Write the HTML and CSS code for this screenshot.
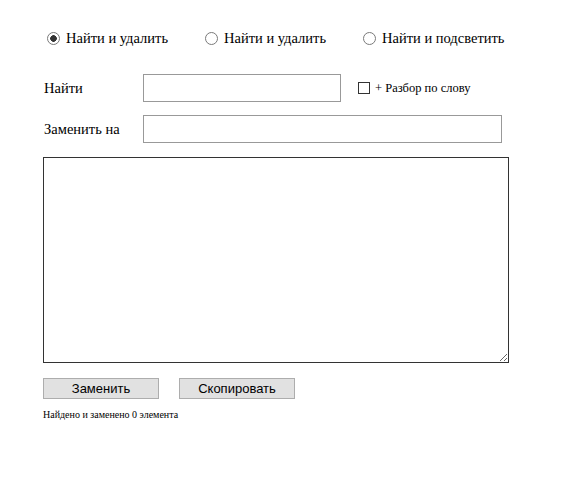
FILE: index.html
```
<!DOCTYPE html>
<html lang="ru">
<head>
  <meta charset="UTF-8" />
  <title>Найти и заменить</title>
  <link rel="stylesheet" href="styles.css">
</head>
<body>
  <div class="wrap">
    <div class="modes">
      <label class="mode"><input type="radio" name="mode" checked> Найти и удалить</label>
      <label class="mode"><input type="radio" name="mode"> Найти и удалить</label>
      <label class="mode"><input type="radio" name="mode"> Найти и подсветить</label>
    </div>

    <div class="row">
      <span class="caption">Найти</span>
      <input type="text" class="find">
      <label class="word"><input type="checkbox"> + Разбор по слову</label>
    </div>

    <div class="row">
      <span class="caption">Заменить на</span>
      <input type="text" class="replace">
    </div>

    <textarea class="text"></textarea>

    <div class="buttons">
      <button type="button">Заменить</button>
      <button type="button">Скопировать</button>
    </div>

    <p class="status">Найдено и заменено 0 элемента</p>
  </div>
</body>
</html>
```
FILE: styles.css
```
* {
  box-sizing: border-box;
}

body {
  margin: 0;
  background: #fff;
  color: #000;
  font-family: "Liberation Serif", "Times New Roman", serif;
}

.wrap {
  width: 509px;
  padding: 30px 0 0 43px;
}

.modes {
  display: flex;
  padding-left: 4px;
  font-size: 14.5px;
}

.mode {
  display: flex;
  flex-shrink: 0;
  align-items: center;
  gap: 6px;
  width: 158px;
}

.mode input {
  appearance: none;
  margin: 0;
  width: 13px;
  height: 13px;
  border: 1px solid #7a7a7a;
  border-radius: 50%;
  background: #fff;
}

.mode input:checked {
  background: radial-gradient(circle, #333 0, #333 3px, #fff 3.6px);
}

.row {
  display: flex;
  align-items: center;
  margin-top: 13px;
  font-size: 14.5px;
}

.modes + .row {
  margin-top: 27px;
}

.caption {
  width: 100px;
  padding-left: 1px;
}

input[type="text"] {
  height: 28px;
  margin: 0;
  border: 1px solid #999;
  font-size: 15px;
}

.find {
  width: 198px;
}

.replace {
  width: 359px;
  height: 27px;
  border-color: #b8b8b8;
  border-width: 2px 1px 1px 1px;
}

.word {
  display: flex;
  flex-shrink: 0;
  align-items: center;
  gap: 5px;
  margin-left: 17px;
  font-size: 12.5px;
}

.word input {
  appearance: none;
  margin: 0;
  width: 12px;
  height: 12px;
  border: 1px solid #333;
  background: #fff;
}

.text {
  display: block;
  width: 466px;
  height: 206px;
  margin: 14px 0 0;
  border: 1px solid #333;
  resize: both;
}

.buttons {
  display: flex;
  gap: 20px;
  margin-top: 15px;
}

button {
  width: 116px;
  height: 21px;
  padding: 0;
  background: #e1e1e1;
  border: 1px solid #adadad;
  font-family: "Liberation Sans", Arial, sans-serif;
  font-size: 13px;
  color: #000;
}

.status {
  margin: 10px 0 0;
  font-size: 10px;
}
```
